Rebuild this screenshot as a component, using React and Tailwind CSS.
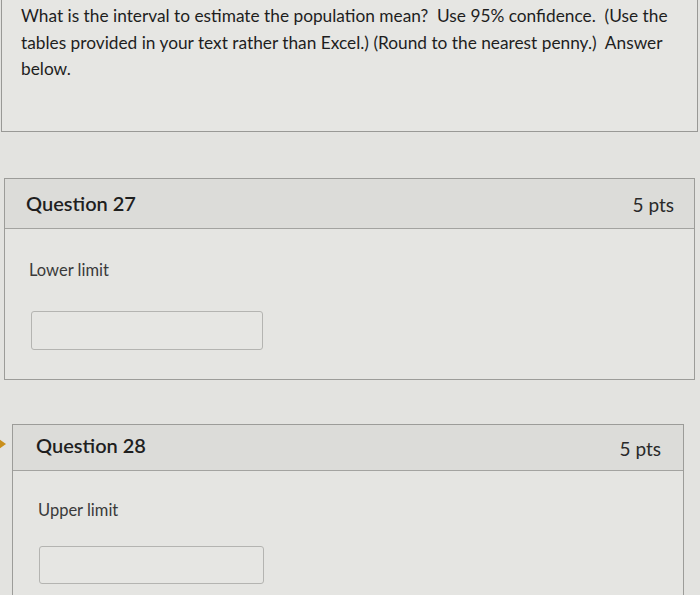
import React from "react";

function QuestionCard({ num, label, className, headerClass, bodyClass, titleClass, ptsClass, inputClass }) {
  return (
    <div className={`border border-[#9c9c99] bg-[#e5e5e2] ${className}`}>
      <div className={`flex items-center justify-between border-b border-[#a3a3a0] bg-[#dcdcd9] ${headerClass}`}>
        <span className={`text-[20px] font-semibold text-[#1f1f1f] ${titleClass}`}>Question {num}</span>
        <span className={`text-[19px] text-[#2a2a2a] ${ptsClass}`}>5 pts</span>
      </div>
      <div className={bodyClass}>
        <div className="text-[16.5px] leading-[20px] text-[#3a3a3a]">{label}</div>
        <div className={`rounded-[3px] border border-[#b4b4b1] bg-[#e6e6e3] ${inputClass}`} />
      </div>
    </div>
  );
}

export default function App() {
  return (
    <div
      className="relative h-[595px] w-[700px] overflow-hidden bg-[#e3e3e0]"
      style={{ fontFamily: "Lato, 'Noto Sans', sans-serif" }}
    >
      <div className="ml-[1px] h-[132px] w-[697px] border border-t-0 border-[#999996] bg-[#e6e6e3] pl-[19px] pt-[3px]">
        <p className="whitespace-pre-wrap text-[17.3px] leading-[26.5px] text-[#1e1e1e]">
          {"What is the interval to estimate the population mean?  Use 95% confidence.  (Use the\ntables provided in your text rather than Excel.) (Round to the nearest penny.)  Answer\nbelow."}
        </p>
      </div>

      <QuestionCard
        num={27}
        label="Lower limit"
        className="ml-[4px] mt-[46px] h-[202px] w-[691px]"
        headerClass="h-[50px] pl-[21px] pr-[20px]"
        titleClass="-mt-[2px]"
        ptsClass="mt-[4px]"
        bodyClass="pl-[24px] pt-[31px]"
        inputClass="h-[39px] w-[232px] ml-[2px] mt-[31px]"
      />

      <QuestionCard
        num={28}
        label="Upper limit"
        className="ml-[12px] mt-[44px] h-[240px] w-[672px]"
        headerClass="h-[46px] pl-[23px] pr-[22px]"
        titleClass="-mt-[6px]"
        ptsClass="mt-[4px]"
        bodyClass="pl-[25px] pt-[29px]"
        inputClass="h-[38px] w-[225px] ml-[1px] mt-[26px]"
      />

      <div className="absolute left-[-4px] top-[437px] h-0 w-0 border-y-[7px] border-l-[10px] border-y-transparent border-l-[#c98f1c]" />
    </div>
  );
}
